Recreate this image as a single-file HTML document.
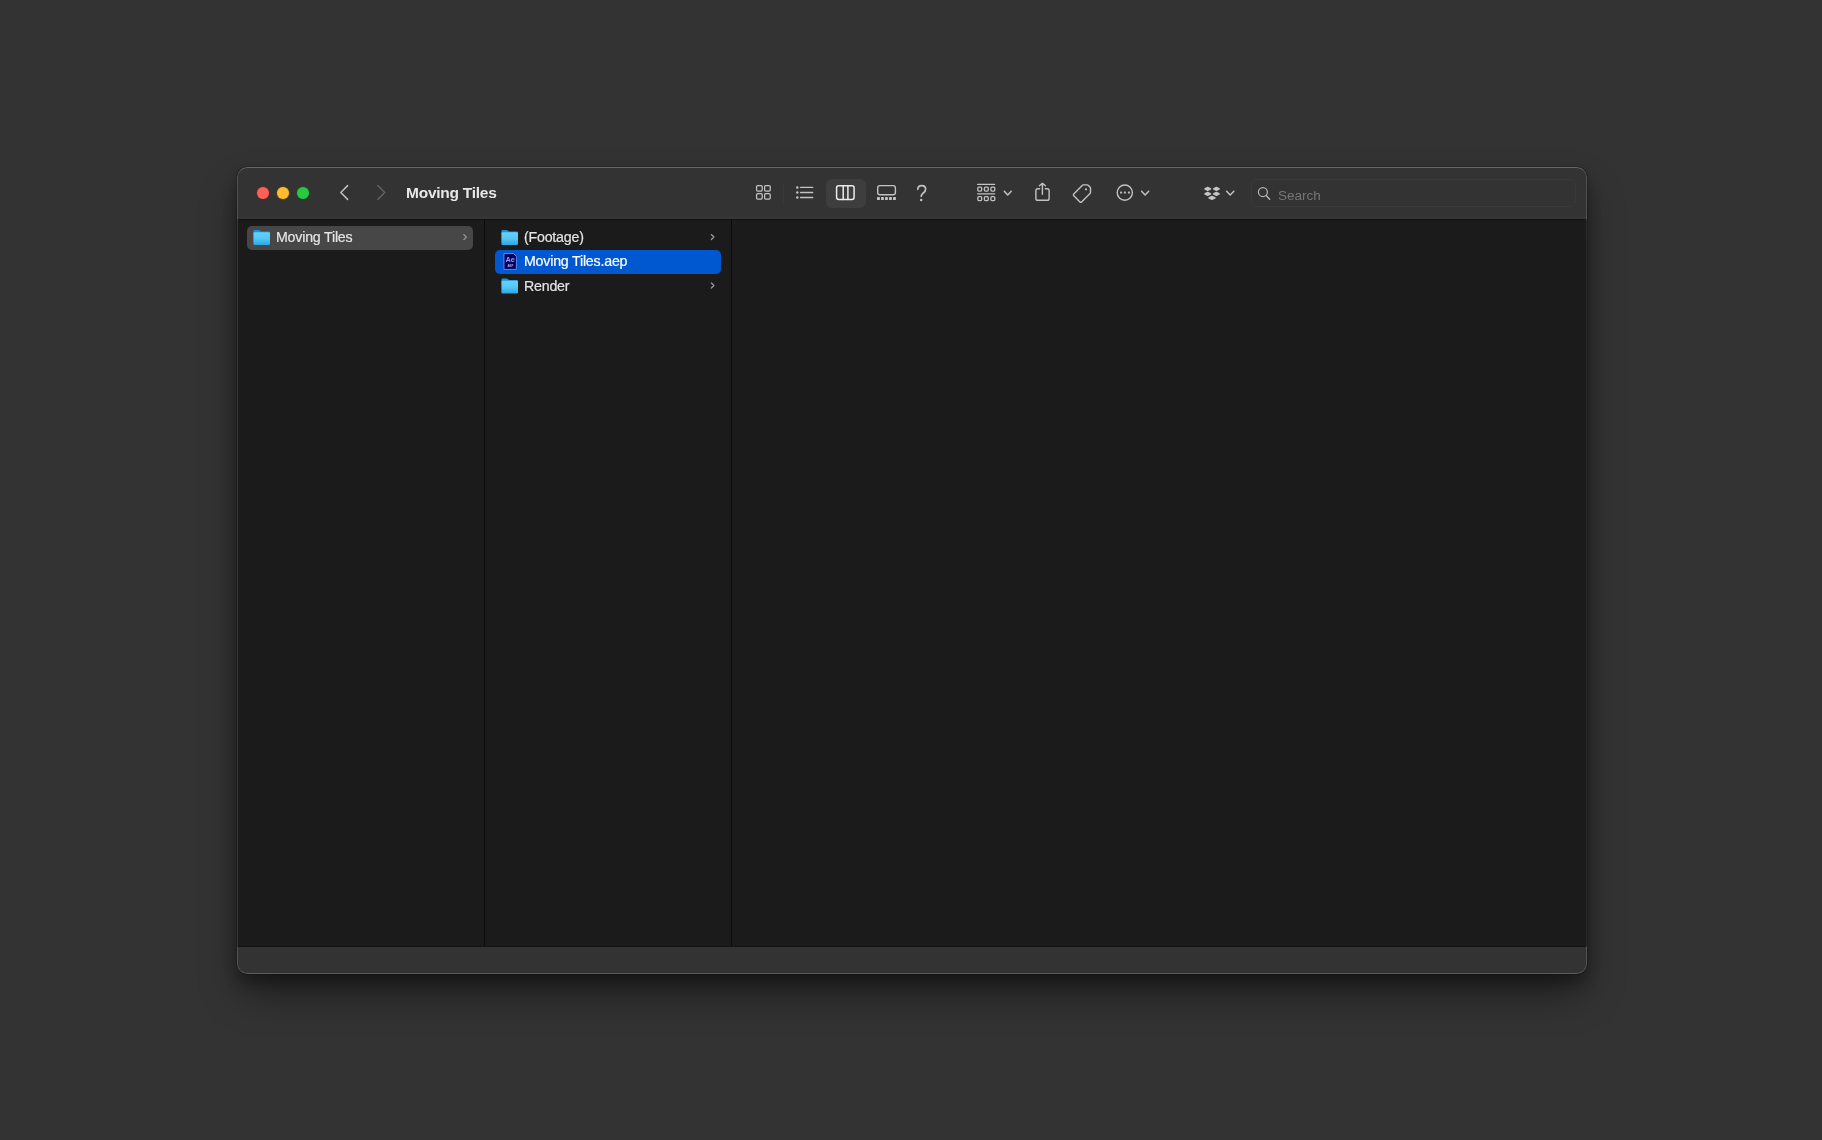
<!DOCTYPE html>
<html><head><meta charset="utf-8">
<style>
html,body{margin:0;padding:0;width:1822px;height:1140px;overflow:hidden;background:#333333;font-family:"Liberation Sans",sans-serif;}
*{box-sizing:border-box;}
.abs{position:absolute;}
#win{position:absolute;left:237px;top:167px;width:1350px;height:807px;border-radius:10px;background:#1b1b1b;
 box-shadow:0 0 0 1px rgba(0,0,0,0.15),0 8px 14px rgba(0,0,0,0.3),0 22px 40px -4px rgba(0,0,0,0.45);overflow:hidden;}
#toolbar{position:absolute;left:0;top:0;width:100%;height:52px;background:#333333;}
#tbhi{position:absolute;left:0;top:50px;width:100%;height:1px;background:#383838;}
#tbline{position:absolute;left:0;top:52px;width:100%;height:1px;background:#141414;}
#bottom{position:absolute;left:0;bottom:0;width:100%;height:27px;background:#333333;}
#botline{position:absolute;left:0;bottom:27px;width:100%;height:1px;background:#121212;}
#stroke{position:absolute;left:0;top:0;width:1350px;height:807px;border-radius:10px;border:1px solid rgba(255,255,255,0.16);border-top-color:rgba(255,255,255,0.26);border-bottom-color:rgba(255,255,255,0.2);pointer-events:none;}
.txt{position:absolute;color:#e4e4e4;font-size:14.2px;letter-spacing:-0.2px;white-space:nowrap;line-height:16px;will-change:transform;-webkit-text-stroke:0.2px currentColor;}
.dot{position:absolute;width:12px;height:12px;border-radius:50%;}
svg.ov{position:absolute;left:0;top:0;width:1822px;height:1140px;}
</style></head>
<body>
<div id="win">
 <div id="toolbar"></div>
 <div id="tbhi"></div>
 <div id="tbline"></div>
 <div id="botline"></div>
 <div id="bottom"></div>
 <div id="stroke"></div>
 <div class="abs" style="left:0;top:53px;width:1px;height:726px;background:#363636"></div>
 <div class="abs" style="right:0;top:53px;width:1px;height:726px;background:#2b2b2b"></div>
</div>
<!-- dividers (page coords) -->
<div class="abs" style="left:484px;top:220px;width:1px;height:726px;background:#0b0b0b"></div>
<div class="abs" style="left:731px;top:220px;width:1px;height:726px;background:#0b0b0b"></div>

<!-- toolbar selected segment -->
<div class="abs" style="left:825.5px;top:178.5px;width:40px;height:29px;border-radius:6px;background:#3e3e3e"></div>
<!-- search field -->
<div class="abs" style="left:1251px;top:179px;width:325px;height:28px;border-radius:6px;border:1px solid #3a3a3a;background:#333"></div>

<!-- sidebar column row -->
<div class="abs" style="left:247px;top:226px;width:226px;height:24px;border-radius:5px;background:#474747"></div>
<!-- selection column 2 -->
<div class="abs" style="left:495px;top:250px;width:226px;height:24px;border-radius:5px;background:#0058d0"></div>

<!-- traffic lights -->
<div class="dot" style="left:257px;top:187px;background:#fe5f57;box-shadow:0 0 0 0.6px #7a2420"></div>
<div class="dot" style="left:277px;top:187px;background:#febc2e;box-shadow:0 0 0 0.6px #6e5010"></div>
<div class="dot" style="left:297px;top:187px;background:#28c840;box-shadow:0 0 0 0.6px #145c1c"></div>

<!-- texts -->
<div class="txt" style="left:406px;top:183.5px;font-size:15.5px;font-weight:bold;color:#e8e8e8;line-height:18px;letter-spacing:-0.25px;-webkit-text-stroke:0">Moving Tiles</div>
<div class="txt" style="left:276px;top:228.5px;">Moving Tiles</div>
<div class="txt" style="left:524px;top:228.8px;">(Footage)</div>
<div class="txt" style="left:524px;top:253px;color:#fff">Moving Tiles.aep</div>
<div class="txt" style="left:524px;top:277.8px;">Render</div>
<div class="txt" style="left:1278px;top:187.6px;font-size:13.5px;color:#767676;letter-spacing:0;-webkit-text-stroke:0">Search</div>

<svg class="ov" viewBox="0 0 1822 1140">
 <defs>
  <linearGradient id="fg" x1="0" y1="0" x2="0" y2="1">
   <stop offset="0" stop-color="#62d2ff"/><stop offset="0.5" stop-color="#55c6f8"/><stop offset="1" stop-color="#2ea6e0"/>
  </linearGradient>
  <g id="folder">
   <path d="M0.3,1.2 Q0.3,0 1.5,0 L5.5,0 Q6.3,0 6.9,0.8 L7.6,1.6 L15.8,1.6 Q16.8,1.6 16.8,2.6 L16.8,4 L0.3,4 Z" fill="#1b94d6"/>
   <rect x="0.2" y="2.3" width="16.6" height="12.6" rx="1.2" fill="url(#fg)"/>
  </g>
 </defs>
 <g fill="none" stroke-linecap="round" stroke-linejoin="round">
  <!-- nav chevrons -->
  <polyline points="347.6,185.6 340.8,192.5 347.6,199.4" stroke="#c0c0c0" stroke-width="1.5"/>
  <polyline points="377.9,185.6 384.7,192.5 377.9,199.4" stroke="#606060" stroke-width="1.5"/>
  <!-- icon view -->
  <g stroke="#c2c2c2" stroke-width="1.25">
   <rect x="756.6" y="185.5" width="5.6" height="5.6" rx="1.1"/>
   <rect x="764.6" y="185.5" width="5.6" height="5.6" rx="1.1"/>
   <rect x="756.6" y="193.6" width="5.6" height="5.6" rx="1.1"/>
   <rect x="764.6" y="193.6" width="5.6" height="5.6" rx="1.1"/>
  </g>
  <line x1="783.6" y1="184.5" x2="783.6" y2="203" stroke="#3a3a3a" stroke-width="1"/>
  <!-- list view -->
  <g stroke="#c2c2c2" stroke-width="1.4">
   <line x1="800.6" y1="187.4" x2="812.7" y2="187.4"/>
   <line x1="800.6" y1="192.5" x2="812.7" y2="192.5"/>
   <line x1="800.6" y1="197.5" x2="812.7" y2="197.5"/>
  </g>
  <g fill="#c2c2c2" stroke="none">
   <circle cx="797.3" cy="187.4" r="1.25"/><circle cx="797.3" cy="192.5" r="1.25"/><circle cx="797.3" cy="197.5" r="1.25"/>
  </g>
  <!-- column view (selected) -->
  <g stroke="#ececec" stroke-width="1.5">
   <rect x="836.6" y="185.7" width="17.5" height="13.7" rx="2.1"/>
   <line x1="843.2" y1="185.7" x2="843.2" y2="199.4"/>
   <line x1="847.9" y1="185.7" x2="847.9" y2="199.4"/>
  </g>
  <!-- gallery -->
  <rect x="877.7" y="185.6" width="17.7" height="9.1" rx="2.2" stroke="#c2c2c2" stroke-width="1.4"/>
  <g fill="#c2c2c2" stroke="none">
   <rect x="877" y="197.1" width="2.9" height="2.9" rx="0.5"/>
   <rect x="881" y="197.1" width="2.9" height="2.9" rx="0.5"/>
   <rect x="885" y="197.1" width="2.9" height="2.9" rx="0.5"/>
   <rect x="889" y="197.1" width="2.9" height="2.9" rx="0.5"/>
   <rect x="893" y="197.1" width="2.9" height="2.9" rx="0.5"/>
  </g>
  <!-- help ? -->
  <path d="M917.8,189.3 C917.9,186.9 919.6,185.7 921.7,185.7 C924,185.7 925.6,187.1 925.6,189.2 C925.6,191 924.6,192 923.3,193 C922,194 921.2,194.9 921.2,196.2" stroke="#c2c2c2" stroke-width="1.7"/>
  <circle cx="921.2" cy="200.1" r="1.25" fill="#c2c2c2" stroke="none"/>
  <!-- group -->
  <g stroke="#c2c2c2" stroke-width="1.3">
   <line x1="977.6" y1="184.4" x2="994.6" y2="184.4"/>
   <line x1="977.6" y1="193.8" x2="994.6" y2="193.8"/>
   <rect x="977.8" y="187.2" width="3.9" height="4" rx="1.1"/>
   <rect x="984.4" y="187.2" width="3.9" height="4" rx="1.1"/>
   <rect x="990.9" y="187.2" width="3.9" height="4" rx="1.1"/>
   <rect x="977.8" y="196.6" width="3.9" height="4" rx="1.1"/>
   <rect x="984.4" y="196.6" width="3.9" height="4" rx="1.1"/>
   <rect x="990.9" y="196.6" width="3.9" height="4" rx="1.1"/>
  </g>
  <!-- chevrons down -->
  <g stroke="#c2c2c2" stroke-width="1.5">
   <polyline points="1004.3,191.3 1007.7,195 1011.2,191.3"/>
   <polyline points="1141.6,191.3 1145.1,195 1148.7,191.3"/>
   <polyline points="1226.6,191.3 1230.2,195 1233.8,191.3"/>
  </g>
  <!-- share -->
  <g stroke="#c2c2c2" stroke-width="1.4">
   <path d="M1039.6,188.8 L1037.8,188.8 Q1035.9,188.8 1035.9,190.7 L1035.9,198.4 Q1035.9,200.3 1037.8,200.3 L1047.2,200.3 Q1049.1,200.3 1049.1,198.4 L1049.1,190.7 Q1049.1,188.8 1047.2,188.8 L1045.3,188.8"/>
   <line x1="1042.4" y1="183.6" x2="1042.4" y2="194.3"/>
   <polyline points="1039.4,185.8 1042.4,183.4 1045.4,185.8"/>
  </g>
  <!-- tag -->
  <path d="M1083.2,184.9 L1087.3,184.9 Q1087.9,184.9 1088.4,185.4 L1090,187 Q1090.5,187.5 1090.5,188.1 L1090.5,192.5 Q1090.5,193.1 1090,193.6 L1081.6,201.9 Q1080.8,202.7 1080,201.9 L1073.8,195.7 Q1073,194.9 1073.8,194.1 L1082.2,185.4 Q1082.6,184.9 1083.2,184.9 Z" stroke="#c2c2c2" stroke-width="1.4"/>
  <circle cx="1086" cy="189.3" r="1.1" fill="#c2c2c2" stroke="none"/>
  <!-- more -->
  <circle cx="1124.8" cy="192.6" r="7.6" stroke="#c2c2c2" stroke-width="1.4"/>
  <g fill="#c2c2c2" stroke="none">
   <rect x="1120.1" y="191.6" width="2" height="2" rx="0.4"/>
   <rect x="1123.9" y="191.6" width="2" height="2" rx="0.4"/>
   <rect x="1127.9" y="191.6" width="2" height="2" rx="0.4"/>
  </g>
  <!-- dropbox -->
  <g fill="#c6c6c6" stroke="#c6c6c6" stroke-width="1.2" stroke-linejoin="round">
   <path d="M1204.80,188.9 L1207.7,187.4 L1210.60,188.9 L1207.7,190.4 Z"/>
   <path d="M1213.50,188.9 L1216.4,187.4 L1219.30,188.9 L1216.4,190.4 Z"/>
   <path d="M1204.80,193.9 L1207.7,192.4 L1210.60,193.9 L1207.7,195.4 Z"/>
   <path d="M1213.50,193.9 L1216.4,192.4 L1219.30,193.9 L1216.4,195.4 Z"/>
   <path d="M1208.90,197.9 L1212,196.35 L1215.10,197.9 L1212,199.45000000000002 Z"/>
  </g>
  <!-- magnifier -->
  <circle cx="1262.9" cy="192" r="4.5" stroke="#b5b5b5" stroke-width="1.25"/>
  <line x1="1266.2" y1="195.5" x2="1269.6" y2="199.3" stroke="#b5b5b5" stroke-width="1.4"/>
  <!-- row chevrons -->
  <g stroke="#999999" stroke-width="1.35">
   <polyline points="463.9,234.6 466.3,237.1 463.9,239.6"/>
   <polyline points="711.4,234.6 713.9,237.1 711.4,239.6"/>
   <polyline points="711.4,283.1 713.9,285.6 711.4,288.1"/>
  </g>
 </g>
 <!-- folders -->
 <use href="#folder" x="253.2" y="230"/>
 <use href="#folder" x="501.2" y="230"/>
 <use href="#folder" x="501.2" y="278.5"/>
 <!-- AE icon -->
 <path d="M504,253.6 L513.6,253.6 L516.4,256.4 L516.4,269.4 L504,269.4 Z" fill="#00005b" stroke="#6e8dff" stroke-width="0.9"/>
 <text x="510.2" y="262.2" font-family="Liberation Sans" font-weight="bold" font-size="7.4" fill="#9999ff" text-anchor="middle">Ae</text>
 <text x="510.4" y="267.4" font-family="Liberation Sans" font-weight="bold" font-size="2.8" fill="#b5b5ff" text-anchor="middle">AEP</text>
</svg>
</body></html>
